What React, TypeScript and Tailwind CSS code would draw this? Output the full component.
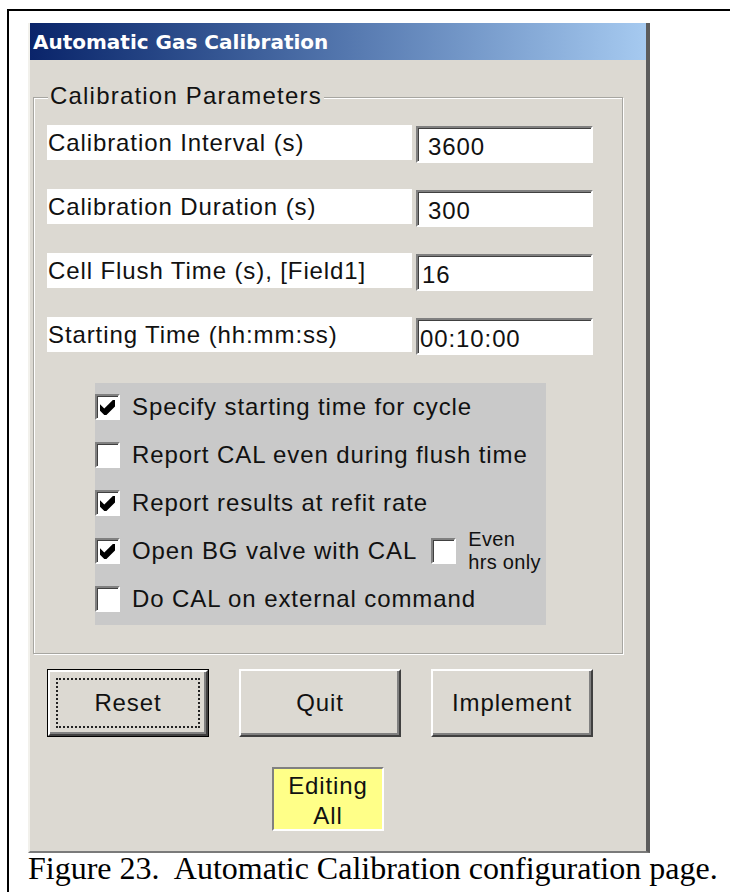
import type { ReactNode } from "react";

// classic 3D bevels
const sunken =
  "border-2 border-t-[#808080] border-l-[#808080] border-r-white border-b-white shadow-[inset_1px_1px_0_#404040]";
const raised =
  "border-2 border-t-white border-l-white border-r-[#404040] border-b-[#404040] shadow-[inset_-2px_-2px_0_#808080]";

const fields = [
  { label: "Calibration Interval (s)", value: "3600", pad: "pl-[10px]" },
  { label: "Calibration Duration (s)", value: "300", pad: "pl-[10px]" },
  { label: "Cell Flush Time (s), [Field1]", value: "16", pad: "pl-[4px]" },
  { label: "Starting Time (hh:mm:ss)", value: "00:10:00", pad: "pl-[2px]" },
];

const options: { label: string; on: boolean; evenHrs?: boolean }[] = [
  { label: "Specify starting time for cycle", on: true },
  { label: "Report CAL even during flush time", on: false },
  { label: "Report results at refit rate", on: true },
  { label: "Open BG valve with CAL", on: true, evenHrs: true },
  { label: "Do CAL on external command", on: false },
];

function CheckBox({ on }: { on: boolean }) {
  return (
    <span className={`flex h-[26px] w-[25px] shrink-0 items-center justify-center bg-white ${sunken}`}>
      {on && (
        <svg width="15" height="15" viewBox="0 0 7 7" className="-ml-[1px]">
          <polygon points="0,2 2,4 6,0 7,0 7,3 3,7 2,7 0,5" fill="#000" />
        </svg>
      )}
    </span>
  );
}

function Button({ children, isDefault }: { children: ReactNode; isDefault?: boolean }) {
  if (isDefault) {
    return (
      <div className="h-[68px] w-[162px] border border-black">
        <div className={`flex h-full w-full items-center justify-center p-[6px] ${raised}`}>
          <div className="flex h-full w-full items-center justify-center border-2 border-dotted border-[#222]">
            {children}
          </div>
        </div>
      </div>
    );
  }
  return (
    <div className={`flex h-[68px] w-[162px] items-center justify-center ${raised}`}>{children}</div>
  );
}

export default function App() {
  return (
    <div className="h-[892px] w-[730px] overflow-hidden bg-white pl-[7px] pt-[9px]">
      <div className="h-full border-l-2 border-t-2 border-black">
        <div className="ml-[19px] mt-[12px] flex h-[830px] w-[622px] flex-col border-b-2 border-l-2 border-r-4 border-b-[#7a7a7a] border-l-[#f2f1ec] border-r-[#5c5c5c] bg-[#dcd9d2] font-['Liberation_Sans',Arial,sans-serif] text-[24px] tracking-[0.9px] text-[#111]">
          {/* title bar */}
          <div className="flex h-[37px] items-center bg-linear-to-r from-[#0a246a] to-[#a6caf0] pl-[3px] font-['DejaVu_Sans',sans-serif] text-[20px] font-bold tracking-normal text-white">
            Automatic Gas Calibration
          </div>

          {/* Calibration Parameters group */}
          <div className="relative ml-[3px] mt-[37px] w-[590px] border border-[#a7a6a1] pb-[28px] pl-[13px] pt-[27px] shadow-[1px_1px_0_#fff,inset_1px_1px_0_#fff]">
            <span className="absolute left-[14px] top-[-15px] bg-[#dcd9d2] px-[2px] text-[24px] leading-[26px] tracking-[1.2px]">
              Calibration Parameters
            </span>

            <div className="flex flex-col gap-[26px]">
              {fields.map((f) => (
                <div key={f.label} className="flex items-start gap-[4px]">
                  <div className="h-[35px] w-[365px] bg-white pl-[1px] leading-[35px]">{f.label}</div>
                  <div className={`mt-[1px] h-[37px] w-[177px] bg-white pt-[6px] leading-[26px] ${f.pad} ${sunken}`}>
                    {f.value}
                  </div>
                </div>
              ))}
            </div>

            <div className="ml-[48px] mt-[28px] flex h-[242px] w-[451px] flex-col bg-[#c9c9c9]">
              {options.map((o) => (
                <div key={o.label} className="flex h-[48px] items-center">
                  <CheckBox on={o.on} />
                  <span className="ml-[12px] leading-[26px]">{o.label}</span>
                  {o.evenHrs && (
                    <>
                      <span className="ml-[14px]">
                        <CheckBox on={false} />
                      </span>
                      <span className="ml-[12px] flex flex-col text-[20px] leading-[23px] tracking-[0.3px]">
                        <span>Even</span>
                        <span>hrs only</span>
                      </span>
                    </>
                  )}
                </div>
              ))}
            </div>
          </div>

          {/* buttons */}
          <div className="ml-[17px] mt-[15px] flex gap-[30px]">
            <Button isDefault>Reset</Button>
            <Button>Quit</Button>
            <Button>Implement</Button>
          </div>

          <div className="ml-[242px] mt-[30px] flex h-[64px] w-[112px] flex-col items-center overflow-hidden border-2 border-b-white border-l-[#808080] border-r-white border-t-[#808080] bg-[#ffff88] pt-[2px] leading-[30px]">
            <span>Editing</span>
            <span>All</span>
          </div>
        </div>

        <p className="ml-[19px] whitespace-pre font-['Liberation_Serif','Times_New_Roman',serif] text-[32px] leading-[30px] text-black">
          {"Figure 23.  Automatic Calibration configuration page."}
        </p>
      </div>
    </div>
  );
}
